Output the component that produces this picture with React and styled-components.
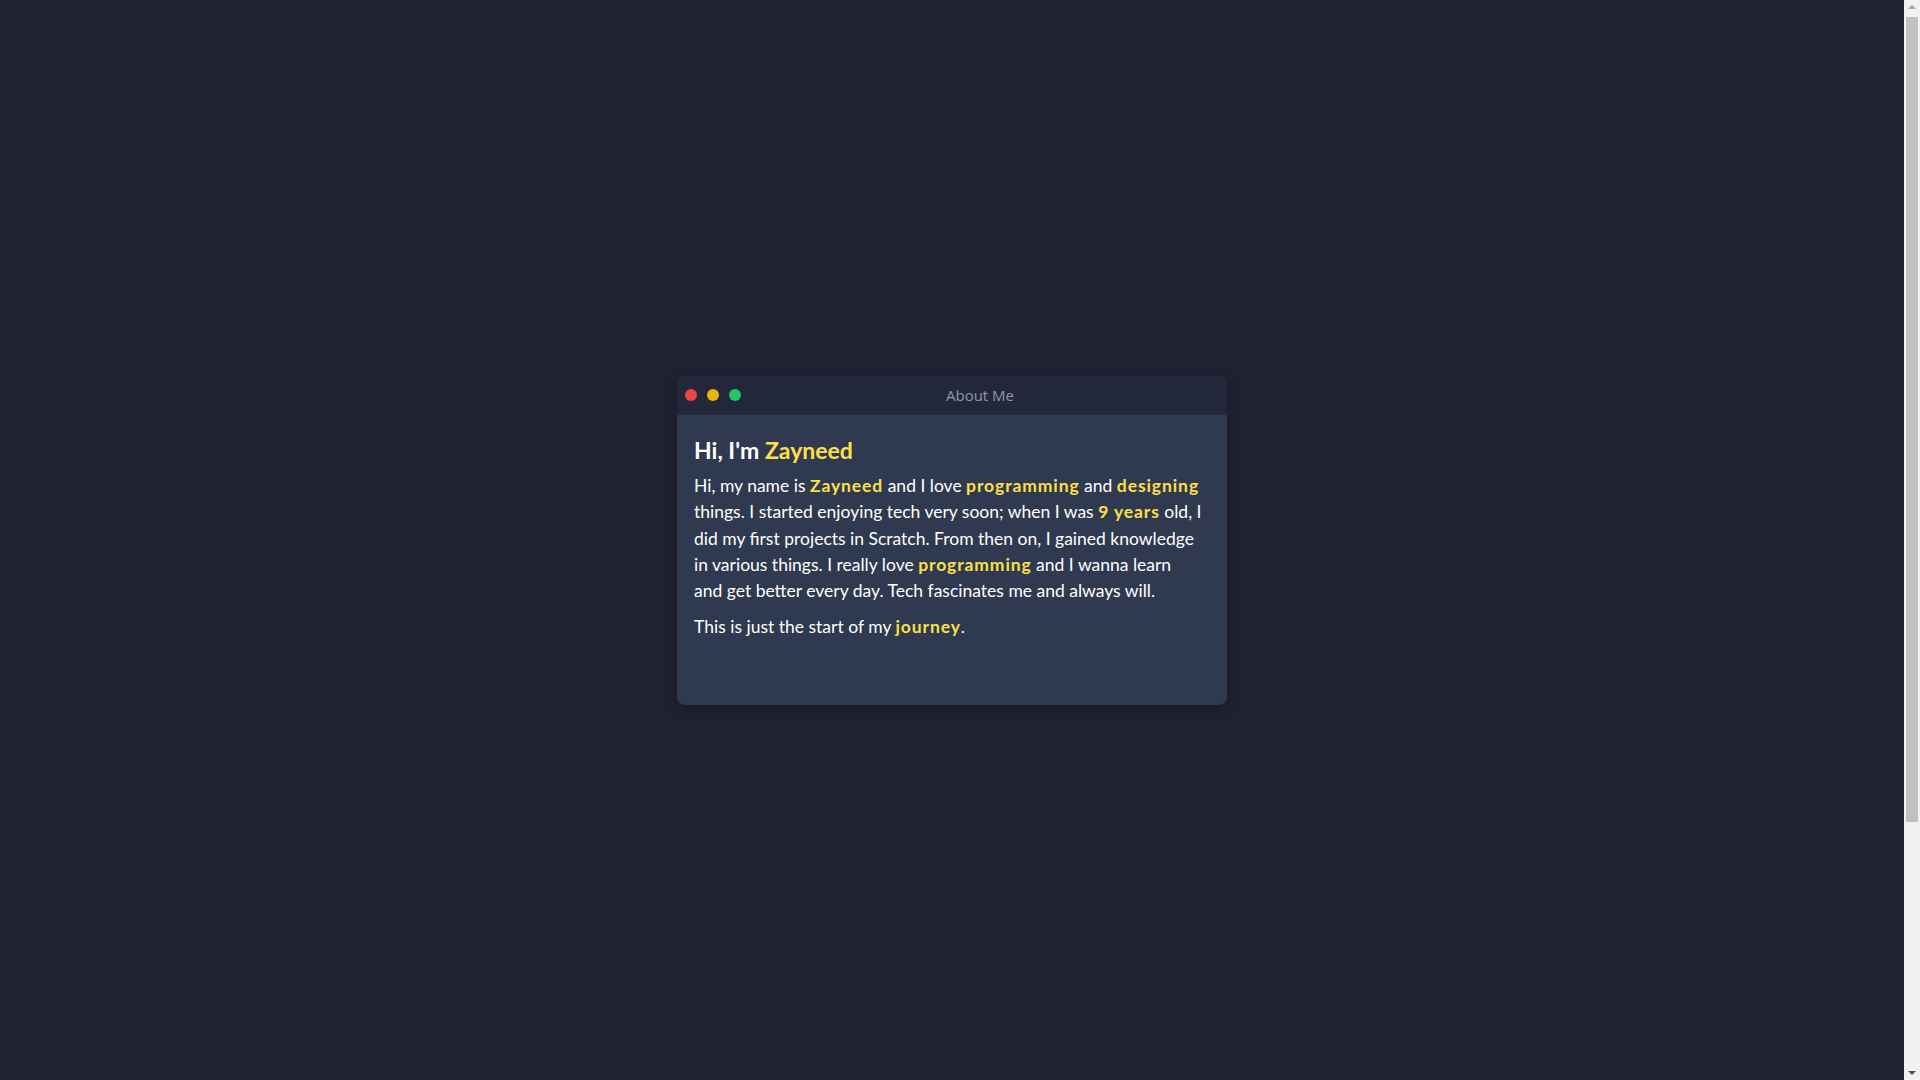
import React from "react";
import styled, { createGlobalStyle } from "styled-components";

const Global = createGlobalStyle`
  html, body { margin: 0; padding: 0; }
  body {
    background: #1e2232;
    font-family: Lato, "Open Sans", sans-serif;
    color: #ffffff;
  }
`;

const Page = styled.main`
  min-height: 100vh;
  padding-right: 16px;
  box-sizing: border-box;
  display: flex;
  align-items: center;
  justify-content: center;
`;

const ScrollTrack = styled.div`
  position: fixed;
  top: 0;
  right: 0;
  width: 16px;
  height: 100vh;
  background: #f1f1f1;
`;

const ScrollThumb = styled.div`
  position: absolute;
  left: 2px;
  right: 2px;
  top: 17px;
  height: 805px;
  background: #c1c1c1;
`;

const Arrow = styled.div`
  position: absolute;
  left: 4px;
  width: 0;
  height: 0;
  border-left: 4px solid transparent;
  border-right: 4px solid transparent;
  ${(p) =>
    p.$up
      ? "top: 5px; border-bottom: 4px solid #a3a3a3;"
      : "bottom: 5px; border-top: 4px solid #505050;"}
`;

const Window = styled.section`
  width: 550px;
  height: 329px;
  display: flex;
  flex-direction: column;
  border-radius: 8px;
  overflow: hidden;
  background: #2f394f;
  box-shadow: 0 4px 14px rgba(0, 0, 0, 0.25);
`;

const TitleBar = styled.header`
  height: 39px;
  flex-shrink: 0;
  display: flex;
  align-items: center;
  padding: 0 8px;
  background: #222839;
`;

const Dots = styled.div`
  display: flex;
  gap: 10px;
`;

const Dot = styled.span`
  width: 12px;
  height: 12px;
  border-radius: 50%;
  background: ${(p) => p.$color};
`;

const Title = styled.div`
  flex: 1;
  text-align: center;
  font-family: "Open Sans", sans-serif;
  font-size: 15px;
  color: #8f98aa;
`;

const Body = styled.div`
  flex: 1;
  padding: 19px 21px 18px 17px;
`;

const Heading = styled.h2`
  margin: 0 0 7px;
  font-size: 23px;
  font-weight: 700;
  line-height: 1.4;
`;

const Para = styled.p`
  margin: 0 0 9px;
  font-size: 17.5px;
  line-height: 26.4px;
`;

const Hl = styled.strong`
  color: #fde047;
  font-weight: 700;
  letter-spacing: ${(p) => (p.$wide ? "0.9px" : "normal")};
`;

export default function App() {
  return (
    <>
      <Global />
      <Page>
        <Window>
          <TitleBar>
            <Dots>
              <Dot $color="#ef4444" />
              <Dot $color="#eab308" />
              <Dot $color="#22c55e" />
            </Dots>
            <Title>About Me</Title>
          </TitleBar>
          <Body>
            <Heading>
              Hi, I'm <Hl>Zayneed</Hl>
            </Heading>
            <Para>
              Hi, my name is <Hl $wide>Zayneed</Hl> and I love <Hl $wide>programming</Hl> and{" "}
              <Hl $wide>designing</Hl> things. I started enjoying tech very soon; when I was{" "}
              <Hl $wide>9 years</Hl> old, I did my first projects in Scratch. From then on, I
              gained knowledge in various things. I really love <Hl $wide>programming</Hl> and I
              wanna learn and{"\u00a0"}get better every day. Tech fascinates me and always will.
            </Para>
            <Para>
              This is just the start of my <Hl $wide>journey</Hl>.
            </Para>
          </Body>
        </Window>
      </Page>
      <ScrollTrack aria-hidden="true">
        <Arrow $up />
        <ScrollThumb />
        <Arrow />
      </ScrollTrack>
    </>
  );
}
